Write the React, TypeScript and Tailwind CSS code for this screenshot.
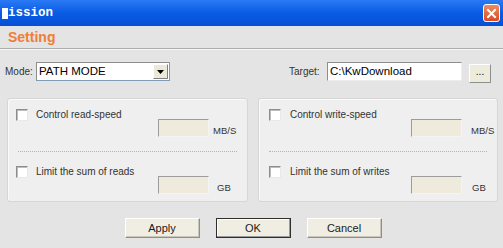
import React from "react";

const font = { fontFamily: '"Liberation Sans", Arial, sans-serif' };

function Check() {
  return (
    <div className="w-[12px] h-[12px] bg-white border border-[#8c8c8c] border-r-[#e8e8e8] border-b-[#e8e8e8] shadow-[inset_1px_1px_0_#bdbdbd] shrink-0" />
  );
}

function Field() {
  return (
    <div className="w-[51px] h-[18px] bg-[#eeebdc] border border-[#9c9c9c] border-r-[#f4f4f4] border-b-[#f4f4f4] shrink-0" />
  );
}

function Block({ label, unit, cx, lx, ix, ux }: { label: string; unit: string; cx: number; lx: number; ix: number; ux: number }) {
  return (
    <div className="relative h-[40px]">
      <div className="absolute top-0" style={{ left: cx }}>
        <Check />
      </div>
      <div className="absolute top-[-1px] text-[10px] text-[#333333] leading-[14px]" style={{ left: lx }}>
        {label}
      </div>
      <div className="absolute top-[10px]" style={{ left: ix }}>
        <Field />
      </div>
      <div className="absolute top-[16px] text-[9.5px] text-[#333333] leading-[12px]" style={{ left: ux }}>
        {unit}
      </div>
    </div>
  );
}

function Panel({ a, b, u1, u2, cx, lx, ix, ux, ux2, w }: any) {
  return (
    <div
      className="h-[104px] bg-[#efefef] border border-[#d6d6d6] rounded-[3px] shadow-[inset_1px_1px_0_#fafafa] pt-[10px] flex flex-col"
      style={{ width: w }}
    >
      <Block label={a} unit={u1} cx={cx} lx={lx} ix={ix} ux={ux} />
      <div className="h-[8px]" />
      <div className="mx-[10px] border-t border-dotted border-[#b4b4b4]" />
      <div className="h-[17px]" />
      <Block label={b} unit={u2} cx={cx} lx={lx} ix={ix} ux={ux2} />
    </div>
  );
}

function Btn({ children, def }: { children: React.ReactNode; def?: boolean }) {
  return (
    <div
      className={
        "w-[75px] h-[20px] flex items-center justify-center text-[11px] text-[#1a1a1a] bg-[#f0eee2] " +
        (def
          ? "border border-[#2f2f2f] shadow-[inset_-1px_-1px_0_#9a9a9a,inset_1px_1px_0_#ffffff]"
          : "border border-[#ffffff] border-r-[#8f8f8f] border-b-[#8f8f8f] shadow-[inset_-1px_-1px_0_#c8c6b8]")
      }
    >
      {children}
    </div>
  );
}

export default function App() {
  return (
    <div className="w-[503px] h-[248px] bg-[#e4e4e4] flex flex-col overflow-hidden" style={font}>
      {/* title bar */}
      <div className="h-[26px] shrink-0 flex items-center justify-between bg-gradient-to-b from-[#2a7af5] via-[#0a5be4] to-[#0650d8] pl-[2px] pr-[3px]">
        <div className="flex items-center text-white font-bold text-[12.5px]" style={{ fontFamily: '"Liberation Mono", "DejaVu Sans Mono", monospace' }}>
          <span className="inline-block w-[6px] h-[11px] bg-white mr-[0px]" />
          <span>ission</span>
        </div>
        <div className="w-[17px] h-[18px] rounded-[3px] border border-white bg-gradient-to-b from-[#ec8a62] to-[#d84a1e] flex items-center justify-center">
          <svg width="11" height="11" viewBox="0 0 11 11">
            <path d="M2 2 L9 9 M9 2 L2 9" stroke="white" strokeWidth="2" strokeLinecap="square" />
          </svg>
        </div>
      </div>
      {/* Setting header */}
      <div className="h-[22px] shrink-0 flex items-center pl-[8px] text-[14px] font-bold text-[#ee7e35]">Setting</div>
      <div className="h-[1px] bg-[#adadad] shrink-0" />
      <div className="h-[1px] bg-[#f6f6f6] shrink-0" />
      {/* mode/target row */}
      <div className="mt-[12px] h-[19px] flex items-center shrink-0">
        <div className="ml-[5px] w-[31px] text-[10px] text-[#333333]">Mode:</div>
        <div className="w-[134px] h-[19px] bg-white border border-[#7f9db9] border-t-[#8d8d8d] border-l-[#8d8d8d] flex items-center justify-between">
          <span className="pl-[2px] text-[11.5px] text-black">PATH MODE</span>
          <div className="w-[15px] h-[15px] mr-[1px] bg-[#ece9d8] border border-white border-r-[#808080] border-b-[#808080] flex items-center justify-center">
            <svg width="7" height="4" viewBox="0 0 7 4"><path d="M0 0 H7 L3.5 4 Z" fill="#000" /></svg>
          </div>
        </div>
        <div className="ml-[119px] w-[38px] text-[10px] text-[#333333]">Target:</div>
        <div className="w-[135px] h-[19px] bg-white border border-[#8d8d8d] border-r-[#ececec] border-b-[#ececec] flex items-center">
          <span className="pl-[2px] text-[11.5px] text-black">C:\KwDownload</span>
        </div>
        <div className="ml-[7px] mt-[3px] w-[22px] h-[19px] bg-[#ecebde] border border-white border-r-[#8f8f8f] border-b-[#8f8f8f] flex items-center justify-center text-[10px] text-black leading-none pb-[2px]">...</div>
      </div>
      {/* panels */}
      <div className="mt-[17px] flex shrink-0">
        <div className="ml-[7px]">
          <Panel w={241} a="Control read-speed" b="Limit the sum of reads" u1="MB/S" u2="GB" cx={8} lx={28} ix={150} ux={205} ux2={209} />
        </div>
        <div className="ml-[10px]">
          <Panel w={240} a="Control write-speed" b="Limit the sum of writes" u1="MB/S" u2="GB" cx={10} lx={31} ix={152} ux={212} ux2={213} />
        </div>
      </div>
      {/* buttons */}
      <div className="mt-[16px] flex justify-center gap-[16px] pl-[3px]">
        <Btn>Apply</Btn>
        <Btn def>OK</Btn>
        <Btn>Cancel</Btn>
      </div>
    </div>
  );
}
